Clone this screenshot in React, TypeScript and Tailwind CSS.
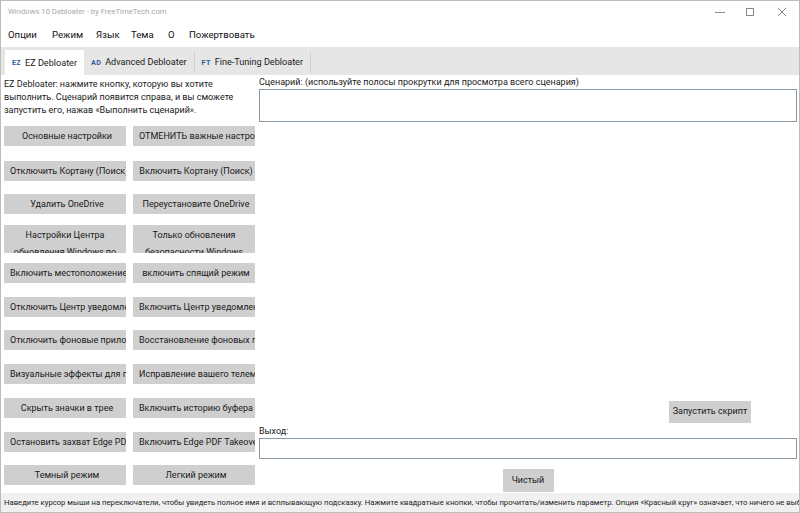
import React from 'react';

const font = { fontFamily: 'Roboto, "Noto Sans", sans-serif' };

const rows: { a: string; b: string; mt: string; tall?: boolean }[] = [
  { a: 'Основные настройки', b: 'ОТМЕНИТЬ важные настройки', mt: 'mt-0' },
  { a: 'Отключить Кортану (Поиск)', b: 'Включить Кортану (Поиск)', mt: 'mt-[15px]' },
  { a: 'Удалить OneDrive', b: 'Переустановите OneDrive', mt: 'mt-[13px]' },
  { a: 'Настройки Центра обновления Windows по умолчанию', b: 'Только обновления безопасности Windows', mt: 'mt-[11px]', tall: true },
  { a: 'Включить местоположение', b: 'включить спящий режим', mt: 'mt-[10px]' },
  { a: 'Отключить Центр уведомлений', b: 'Включить Центр уведомлений', mt: 'mt-[14px]' },
  { a: 'Отключить фоновые приложения', b: 'Восстановление фоновых приложений', mt: 'mt-[13px]' },
  { a: 'Визуальные эффекты для производительности', b: 'Исправление вашего телеметрии', mt: 'mt-[14px]' },
  { a: 'Скрыть значки в трее', b: 'Включить историю буфера обмена', mt: 'mt-[14px]' },
  { a: 'Остановить захват Edge PDF', b: 'Включить Edge PDF Takeover', mt: 'mt-[14px]' },
  { a: 'Темный режим', b: 'Легкий режим', mt: 'mt-[13px]' },
];

const Btn = ({ label, tall }: { label: string; tall?: boolean }) => (
  <div
    className={`w-[122px] ${tall ? 'h-[28px]' : 'h-[20px]'} bg-[#cfcfcf] text-[#1a1a1a] text-[9px] flex ${tall ? 'items-start pt-[2px]' : 'items-center'} overflow-hidden`}
  >
    <span
      className={`block w-full text-center overflow-hidden ${tall ? 'whitespace-normal leading-[17px] px-[8px]' : 'whitespace-nowrap leading-[20px] pl-[6px] pr-[2px]'}`}
    >
      {label}
    </span>
  </div>
);

const Tab = ({ tag, label, active }: { tag: string; label: string; active?: boolean }) => (
  <div
    className={`flex items-center gap-[4px] px-[7px] text-[9.1px] text-[#1a1a1a] ${
      active ? 'bg-white h-[25px] pt-[2px]' : 'border-r border-[#cfcfcf] h-[21px] pt-[1px]'
    }`}
  >
    <span className="text-[7.2px] font-bold text-[#2a5f9e] tracking-[0.3px]">{tag}</span>
    <span>{label}</span>
  </div>
);

export default function App() {
  return (
    <div style={font} className="w-[800px] h-[513px] bg-white border border-[#bcbcbc] flex flex-col overflow-hidden">
      {/* title bar */}
      <div className="h-[22px] flex items-center justify-between pl-[7px] shrink-0">
        <span className="text-[7.7px] text-[#a8a8a8]">Windows 10 Debloater - by FreeTimeTech.com</span>
        <div className="flex items-center h-full">
          <div className="w-[30px] flex justify-center">
            <svg width="10" height="10" viewBox="0 0 10 10"><path d="M0 5.5h10" stroke="#8a8a8a" strokeWidth="1" /></svg>
          </div>
          <div className="w-[30px] flex justify-center">
            <svg width="10" height="10" viewBox="0 0 10 10"><rect x="1.5" y="1.5" width="7" height="7" fill="none" stroke="#8a8a8a" strokeWidth="1" /></svg>
          </div>
          <div className="w-[34px] flex justify-center">
            <svg width="10" height="10" viewBox="0 0 10 10"><path d="M1 1l8 8M9 1l-8 8" stroke="#8a8a8a" strokeWidth="1" /></svg>
          </div>
        </div>
      </div>

      {/* menu */}
      <div className="h-[24px] flex items-center pl-[7px] text-[9.6px] text-[#111] shrink-0">
        <span className="w-[44px]">Опции</span>
        <span className="w-[44px]">Режим</span>
        <span className="w-[35px]">Язык</span>
        <span className="w-[37px]">Тема</span>
        <span className="w-[21px]">О</span>
        <span>Пожертвовать</span>
      </div>

      {/* tabs */}
      <div className="h-[28px] bg-[#e6e6e6] flex items-end pl-[4px] shrink-0">
        <Tab tag="EZ" label="EZ Debloater" active />
        <div className="h-[25px] flex items-center">
          <Tab tag="AD" label="Advanced Debloater" />
          <Tab tag="FT" label="Fine-Tuning Debloater" />
        </div>
      </div>

      {/* content */}
      <div className="flex-1 flex min-h-0">
        <div className="w-[258px] shrink-0 pl-[3px] pt-[3px] flex flex-col">
          <p className="text-[9px] leading-[13px] text-[#1a1a1a] w-[250px]">
            EZ Debloater: нажмите кнопку, которую вы хотите выполнить. Сценарий появится справа, и вы сможете запустить его, нажав «Выполнить сценарий».
          </p>
          <div className="mt-[9px] flex flex-col">
            {rows.map((r) => (
              <div key={r.a} className={`flex gap-[7px] ${r.mt}`}>
                <Btn label={r.a} tall={r.tall} />
                <Btn label={r.b} tall={r.tall} />
              </div>
            ))}
          </div>
        </div>

        <div className="flex-1 flex flex-col pr-[2px] pt-[1px]">
          <span className="text-[9px] leading-[12px] text-[#1a1a1a]">
            Сценарий: (используйте полосы прокрутки для просмотра всего сценария)
          </span>
          <div className="mt-[1px] h-[33px] border border-[#8a98a4] bg-white" />
          <div className="flex-1" />
          <div className="flex justify-end pr-[46px]">
            <div className="w-[82px] h-[22px] bg-[#cfcfcf] text-[9px] text-[#1a1a1a] flex items-center justify-center whitespace-nowrap">
              Запустить скрипт
            </div>
          </div>
          <span className="mt-[2px] text-[9px] leading-[12px] text-[#1a1a1a]">Выход:</span>
          <div className="mt-[1px] h-[21px] border border-[#8a98a4] bg-white" />
          <div className="flex justify-center mt-[10px] mb-[1px]">
            <div className="w-[51px] h-[23px] bg-[#cfcfcf] text-[9px] text-[#1a1a1a] flex items-center justify-center">
              Чистый
            </div>
          </div>
        </div>
      </div>

      {/* status bar */}
      <div className="h-[19px] bg-[#f0f0f0] flex items-center pl-[3px] shrink-0 overflow-hidden">
        <span className="whitespace-nowrap text-[7.7px] text-[#222]">
          Наведите курсор мыши на переключатели, чтобы увидеть полное имя и всплывающую подсказку. Нажмите квадратные кнопки, чтобы прочитать/изменить параметр. Опция «Красный круг» означает, что ничего не выбрано.
        </span>
      </div>
    </div>
  );
}
